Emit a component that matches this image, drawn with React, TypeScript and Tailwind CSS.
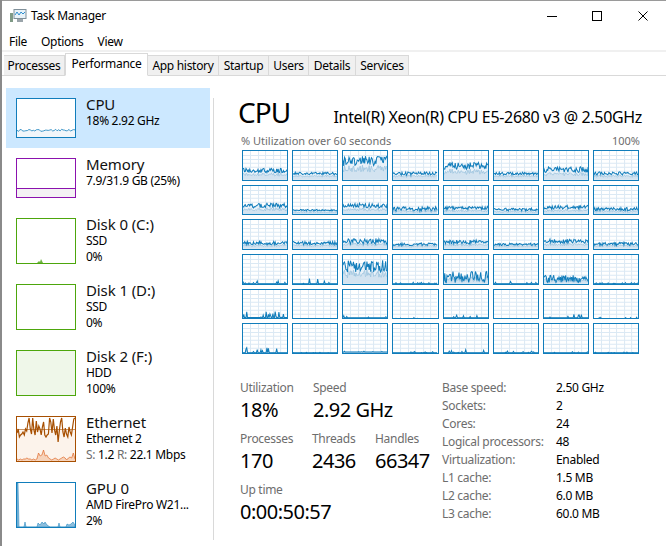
import React from "react";

const CPU_BLUE = "#117dbb";

// per-core graph levels: [level, spikiness], fractions of the graph height
const coreLevels: [number, number][][] = [
  [[0.3, 0.08], [0.2, 0.05], [0.62, 0.18], [0.2, 0.06], [0.45, 0.13], [0.2, 0.05], [0.33, 0.1], [0.2, 0.06]],
  [[0.3, 0.08], [0.15, 0.03], [0.3, 0.08], [0.18, 0.08], [0.22, 0.06], [0.17, 0.05], [0.24, 0.07], [0.18, 0.06]],
  [[0.18, 0.06], [0.18, 0.06], [0.24, 0.1], [0.14, 0.05], [0.22, 0.08], [0.14, 0.04], [0.24, 0.08], [0.15, 0.06]],
  [[0, 0.1], [0, 0.2], [0.58, 0.22], [0, 0.05], [0.2, 0.2], [0, 0.08], [0.14, 0.13], [0, 0.04]],
  [[0.04, 0.22], [0, 0], [0.03, 0.08], [0, 0.04], [0.03, 0.14], [0, 0], [0.03, 0.12], [0, 0.05]],
  [[0, 0.18], [0, 0.01], [0.02, 0.03], [0, 0.04], [0, 0.1], [0, 0.06], [0, 0.03], [0, 0.03]],
];

function series(seed: number, level: number, amp: number, n: number) {
  let s = seed * 7919 + 13;
  const out: number[] = [];
  for (let i = 0; i < n; i++) {
    s = (s * 1103515245 + 12345) % 2147483648;
    const r = s / 2147483648;
    const wobble = level > 0.1 ? (r - 0.4) * 2 * amp : r > 0.86 ? ((r - 0.86) / 0.14) * amp : 0;
    out.push(Math.max(0, Math.min(1, level + wobble)));
  }
  return out;
}

function toPoints(values: number[], w: number, h: number) {
  return values.map((v, i) => `${((i / (values.length - 1)) * w).toFixed(2)},${(h - v * h).toFixed(2)}`).join(" ");
}

function CoreGraph({ seed, level, amp }: { seed: number; level: number; amp: number }) {
  const w = 44;
  const h = 29;
  const main = series(seed, level, amp, 60);
  const kernel = main.map((v, i) => v * (0.5 + (i % 3) * 0.06));
  const pts = toPoints(main, w, h);
  const kernelPts = toPoints(kernel, w, h);
  return (
    <div className="border border-[#117dbb] bg-white h-full">
      <svg viewBox={`0 0 ${w} ${h}`} preserveAspectRatio="none" className="block w-full h-full">
        {[7.5, 15.5, 22.5, 30.5, 37.5].map((x) => (
          <line key={x} x1={x} x2={x} y1={0} y2={h} stroke="#dbe9f4" strokeWidth={1} shapeRendering="crispEdges" />
        ))}
        {[4.5, 8.5, 12.5, 16.5, 20.5, 24.5].map((y) => (
          <line key={y} x1={0} x2={w} y1={y} y2={y} stroke="#dbe9f4" strokeWidth={1} shapeRendering="crispEdges" />
        ))}
        <polygon points={`0,${h} ${pts} ${w},${h}`} fill="#e6f0f8" fillOpacity={0.85} />
        <polygon points={`0,${h} ${kernelPts} ${w},${h}`} fill="#d3e3f0" />
        <polyline points={kernelPts} fill="none" stroke="#9cc4de" strokeWidth={0.8} />
        <polyline points={pts} fill="none" stroke={CPU_BLUE} strokeWidth={1} />
      </svg>
    </div>
  );
}

function Thumb({ kind }: { kind: string }) {
  if (kind === "cpu") {
    return (
      <div className="w-[60px] h-[40px] border border-[#117dbb] bg-white shrink-0">
        <svg viewBox="0 0 58 38" preserveAspectRatio="none" className="block w-full h-full">
          <polygon points={`0,38 ${toPoints(series(3, 0.17, 0.03, 40), 58, 38)} 58,38`} fill="#f1f6fa" />
          <polyline points={toPoints(series(3, 0.17, 0.03, 40), 58, 38)} fill="none" stroke={CPU_BLUE} strokeWidth={0.8} />
        </svg>
      </div>
    );
  }
  if (kind === "memory") {
    return (
      <div className="w-[60px] h-[40px] border border-[#8b12ae] bg-white shrink-0 flex flex-col justify-end">
        <div className="h-[9px] bg-[#f4f2f4] border-t border-[#8b12ae]" />
      </div>
    );
  }
  if (kind === "disk0") {
    return (
      <div className="w-[60px] h-[46px] border border-[#4da60c] bg-white shrink-0">
        <svg viewBox="0 0 58 44" className="block w-full h-full">
          <polygon points="20,44 22,42 23,43 24,40 25,42 26,44" fill="#6db33f" />
        </svg>
      </div>
    );
  }
  if (kind === "disk1") {
    return <div className="w-[60px] h-[46px] border border-[#4da60c] bg-white shrink-0" />;
  }
  if (kind === "disk2") {
    return <div className="w-[60px] h-[46px] border border-[#4da60c] bg-[#eff7e9] shrink-0" />;
  }
  if (kind === "ethernet") {
    const top = [16, 12, 20, 18, 17, 15, 18, 12, 14, 6, 1, 12, 17, 1, 13, 18, 4, 15, 9, 12, 18, 10, 5, 18, 20, 18, 17, 1, 5, 16, 2, 13, 18, 9, 25, 14, 5, 1, 15, 20, 11, 17, 20, 10, 15, 18, 10, 2, 1];
    const linePts = top.map((v, i) => `${((i / (top.length - 1)) * 58).toFixed(1)},${v}`).join(" ");
    const low = [42, 43, 42, 43, 42, 42, 41, 42, 42, 43, 42, 43, 42, 36, 39, 38, 33, 39, 38, 41, 42, 43, 42, 41, 42, 43, 42, 41, 40, 41, 43, 41, 40, 41, 36, 42];
    const lowPts = low.map((v, i) => `${((i / (low.length - 1)) * 58).toFixed(1)},${v}`).join(" ");
    return (
      <div className="w-[60px] h-[46px] border border-[#a74f01] bg-white shrink-0">
        <svg viewBox="0 0 58 44" preserveAspectRatio="none" className="block w-full h-full">
          <rect x={0} y={12.5} width={58} height={31.5} fill="#fcf3eb" />
          <line x1={0} x2={58} y1={12.5} y2={12.5} stroke="#c99566" strokeWidth={1} />
          <polyline points={linePts} fill="none" stroke="#a74f01" strokeWidth={1.2} />
          <polygon points={`0,44 ${lowPts} 58,44`} fill="#f6d3bb" />
          <polyline points={lowPts} fill="none" stroke="#e0682a" strokeWidth={0.7} />
        </svg>
      </div>
    );
  }
  return (
    <div className="w-[60px] h-[46px] border border-[#117dbb] bg-white shrink-0">
      <svg viewBox="0 0 58 44" className="block w-full h-full">
        <polygon
          points="0,44 0,0 1,0 2,44 7,44 8,39 9,44 20,44 21,40 23,42 25,39 27,41 28,39 30,42 33,44 41,44 42,40 43,44 49,44 50,41 52,42 54,41 56,39 58,42 58,44"
          fill="#8fbfdd"
          stroke={CPU_BLUE}
          strokeWidth={0.5}
        />
      </svg>
    </div>
  );
}

function SidebarRow({
  kind,
  title,
  lines,
  rowClass,
}: {
  kind: string;
  title: string;
  lines: React.ReactNode[];
  rowClass: string;
}) {
  return (
    <div className={`flex items-start pl-[10px] pt-[10px] ${rowClass}`}>
      <Thumb kind={kind} />
      <div className="ml-[10px] flex flex-col text-black">
        <div className="text-[15px] leading-[16px] tracking-[-0.1px] -mt-[2px] text-[#111] whitespace-nowrap">{title}</div>
        {lines.map((l, i) => (
          <div key={i} className={`text-[12px] leading-[16px] tracking-[-0.3px] whitespace-nowrap ${i === 0 ? "mt-[1px]" : ""}`}>
            {l}
          </div>
        ))}
      </div>
    </div>
  );
}

function Tab({ label, className }: { label: string; className: string }) {
  return (
    <div className={`h-[21px] bg-[#f0f0f0] border border-[#d9d9d9] border-l-0 flex items-center justify-center text-[12px] tracking-[-0.3px] text-black ${className}`}>
      {label}
    </div>
  );
}

function Stat({ label, value, className }: { label: string; value: string; className: string }) {
  return (
    <div className={className}>
      <div className="text-[12px] leading-[16px] tracking-[-0.3px] text-[#6d6d6d]">{label}</div>
      <div className="text-[20px] leading-[28px] tracking-[-0.5px] text-black">{value}</div>
    </div>
  );
}

const details = [
  ["Base speed:", "2.50 GHz"],
  ["Sockets:", "2"],
  ["Cores:", "24"],
  ["Logical processors:", "48"],
  ["Virtualization:", "Enabled"],
  ["L1 cache:", "1.5 MB"],
  ["L2 cache:", "6.0 MB"],
  ["L3 cache:", "60.0 MB"],
];

export default function App() {
  return (
    <div className="w-[666px] h-[546px] bg-white overflow-hidden border-l-2 border-[#8a8a8a] flex flex-col font-['Noto_Sans',sans-serif] text-black">
      {/* Title bar */}
      <div className="h-[31px] shrink-0 flex items-center border-t border-[#9a9a9a]">
        <svg width="17" height="14" viewBox="0 0 17 14" className="ml-[8px]">
          <rect x="0" y="4" width="3" height="9" fill="#7f9a86" />
          <rect x="4" y="0.5" width="12" height="9" fill="#e8f2f8" stroke="#7f8f99" />
          <polyline points="5,6 7,3 9,6 11,3 13,5 15,3" fill="none" stroke="#2f8fd0" strokeWidth="1" />
          <rect x="7" y="10" width="6" height="3" fill="#9aa4aa" />
        </svg>
        <span className="ml-[4px] text-[12px] tracking-[-0.3px]">Task Manager</span>
        <div className="ml-auto flex items-center pr-[18px]">
          <div className="w-[10px] h-px bg-black" />
          <div className="ml-[35px] w-[10px] h-[10px] border border-black" />
          <svg width="10" height="10" viewBox="0 0 10 10" className="ml-[36px]">
            <path d="M0.5 0.5L9.5 9.5M9.5 0.5L0.5 9.5" stroke="#000" strokeWidth="1" fill="none" />
          </svg>
        </div>
      </div>

      {/* Menu */}
      <div className="h-[19px] shrink-0 flex items-center pt-[2px] text-[12px] tracking-[-0.3px]">
        <span className="ml-[7px]">File</span>
        <span className="ml-[14px]">Options</span>
        <span className="ml-[14px]">View</span>
      </div>
      <div className="h-[2px] shrink-0 bg-[#f0f0f0]" />

      {/* Tabs */}
      <div className="h-[24px] shrink-0 flex items-end pl-[2px] border-b border-[#d9d9d9] relative">
        <div className="flex items-end mb-[-1px]">
          <Tab label="Processes" className="w-[61px] border-l" />
          <div className="h-[23px] w-[83px] bg-white border border-[#d9d9d9] border-b-white border-l-[#d9d9d9] flex items-center justify-center text-[12px] tracking-[-0.3px] pb-[2px]">
            Performance
          </div>
          <Tab label="App history" className="w-[71px]" />
          <Tab label="Startup" className="w-[50px]" />
          <Tab label="Users" className="w-[40px]" />
          <Tab label="Details" className="w-[47px]" />
          <Tab label="Services" className="w-[53px]" />
        </div>
      </div>

      <div className="flex flex-1 min-h-0">
        {/* Sidebar */}
        <div className="w-[211px] shrink-0 pt-[12px] flex">
          <div className="w-[204px] ml-[4px] flex flex-col">
            <SidebarRow kind="cpu" title="CPU" rowClass="h-[60px] bg-[#cce8ff]" lines={["18%  2.92 GHz"]} />
            <SidebarRow kind="memory" title="Memory" rowClass="h-[60px]" lines={["7.9/31.9 GB (25%)"]} />
            <SidebarRow kind="disk0" title="Disk 0 (C:)" rowClass="h-[66px]" lines={["SSD", "0%"]} />
            <SidebarRow kind="disk1" title="Disk 1 (D:)" rowClass="h-[66px]" lines={["SSD", "0%"]} />
            <SidebarRow kind="disk2" title="Disk 2 (F:)" rowClass="h-[66px]" lines={["HDD", "100%"]} />
            <SidebarRow
              kind="ethernet"
              title="Ethernet"
              rowClass="h-[66px]"
              lines={[
                "Ethernet 2",
                <>
                  <span className="text-[#6d6d6d]">S:</span> 1.2 <span className="text-[#6d6d6d]">R:</span> 22.1 Mbps
                </>,
              ]}
            />
            <SidebarRow kind="gpu" title="GPU 0" rowClass="h-[66px]" lines={["AMD FirePro W21...", "2%"]} />
          </div>
        </div>
        <div className="w-px shrink-0 bg-[#d9d9d9] mt-[22px] mb-[6px]" />

        {/* Detail pane */}
        <div className="flex-1 min-w-0 pl-[26px] pr-[24px] flex flex-col">
          <div className="mt-[18px] h-[37px] flex items-end justify-between">
            <span className="text-[28px] leading-[37px] tracking-[-1px] -ml-[2px]">CPU</span>
            <span className="text-[16px] leading-[22px] tracking-[-0.33px] pb-[3px] whitespace-nowrap">
              Intel(R) Xeon(R) CPU E5-2680 v3 @ 2.50GHz
            </span>
          </div>
          <div className="mt-[2px] h-[16px] pl-px pr-[2px] flex justify-between text-[11px] leading-[16px] text-[#6d6d6d]">
            <span>% Utilization over 60 seconds</span>
            <span>100%</span>
          </div>
          <div className="mt-[1px] ml-[2px] mr-[3px] h-[204px] grid grid-cols-8 grid-rows-6 gap-x-[4px] gap-y-[4px]">
            {coreLevels.flatMap((row, r) =>
              row.map(([level, amp], c) => <CoreGraph key={`${r}-${c}`} seed={r * 8 + c + 1} level={level} amp={amp} />)
            )}
          </div>

          <div className="mt-[26px] flex">
            <div className="w-[202px] shrink-0 flex flex-col gap-[7px]">
              <div className="flex">
                <Stat label="Utilization" value="18%" className="w-[73px]" />
                <Stat label="Speed" value="2.92 GHz" className="" />
              </div>
              <div className="flex">
                <Stat label="Processes" value="170" className="w-[72px]" />
                <Stat label="Threads" value="2436" className="w-[63px]" />
                <Stat label="Handles" value="66347" className="" />
              </div>
              <Stat label="Up time" value="0:00:50:57" className="" />
            </div>
            <div className="grid grid-cols-[114px_auto] auto-rows-[18px] text-[12px] leading-[18px] tracking-[-0.3px] -mt-px">
              {details.map(([k, v]) => (
                <React.Fragment key={k}>
                  <span className="text-[#6d6d6d] whitespace-nowrap">{k}</span>
                  <span className="whitespace-nowrap">{v}</span>
                </React.Fragment>
              ))}
            </div>
          </div>
        </div>
      </div>
    </div>
  );
}
